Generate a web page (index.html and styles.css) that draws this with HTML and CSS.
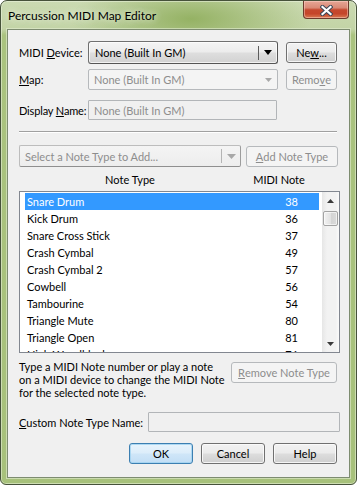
FILE: index.html
```html
<!DOCTYPE html>
<html>
<head>
<meta charset="utf-8">
<link rel="stylesheet" href="styles.css">
</head>
<body>
<div class="window">
  <div class="titlebar">
    <span class="title">Percussion MIDI Map Editor</span>
    <div class="close">
      <svg width="13" height="11" viewBox="0 0 13 11"><path d="M2.5 2 L10.5 9 M10.5 2 L2.5 9" stroke="#3a4656" stroke-width="4.2" stroke-linecap="square"/><path d="M2.5 2 L10.5 9 M10.5 2 L2.5 9" stroke="#ffffff" stroke-width="2.2" stroke-linecap="square"/></svg>
    </div>
  </div>
  <div class="client">
    <div class="row r1">
      <span class="lbl">MIDI <u>D</u>evice:</span>
      <div class="combo active">
        <span class="ctext">None (Built In GM)</span>
        <span class="dsep"></span>
        <span class="arrow"><svg width="8" height="5" viewBox="0 0 8 5"><path d="M0 0H8L4 5Z" fill="#000"/></svg></span>
      </div>
      <div class="btn w50">Ne<u>w</u>...</div>
    </div>
    <div class="row r2">
      <span class="lbl"><u>M</u>ap:</span>
      <div class="combo disabled">
        <span class="ctext">None (Built In GM)</span>
        <span class="arrow"><svg width="7" height="4" viewBox="0 0 7 4"><path d="M0 0H7L3.5 4Z" fill="#a8a8a8"/></svg></span>
      </div>
      <div class="btn w50 dis">Remo<u>v</u>e</div>
    </div>
    <div class="row r3">
      <span class="lbl tight">Display <u>N</u>ame:</span>
      <div class="tbox dn">None (Built In GM)</div>
    </div>
    <div class="sep"></div>
    <div class="row r4">
      <div class="combo disabled raised wsel">
        <span class="ctext">Select a Note Type to Add...</span>
        <span class="dsep light"></span>
        <span class="arrow"><svg width="9" height="5" viewBox="0 0 9 5"><path d="M0 0H9L4.5 5Z" fill="#a8a8a8"/></svg></span>
      </div>
      <div class="btn dis wadd"><u>A</u>dd Note Type</div>
    </div>
    <div class="lhead">
      <span class="hc1">Note Type</span>
      <span class="hc2">MIDI Note</span>
    </div>
    <div class="list">
      <div class="items">
        <div class="item sel"><span class="nm">Snare Drum</span><span class="nt">38</span></div>
        <div class="item"><span class="nm">Kick Drum</span><span class="nt">36</span></div>
        <div class="item"><span class="nm">Snare Cross Stick</span><span class="nt">37</span></div>
        <div class="item"><span class="nm">Crash Cymbal</span><span class="nt">49</span></div>
        <div class="item"><span class="nm">Crash Cymbal 2</span><span class="nt">57</span></div>
        <div class="item"><span class="nm">Cowbell</span><span class="nt">56</span></div>
        <div class="item"><span class="nm">Tambourine</span><span class="nt">54</span></div>
        <div class="item"><span class="nm">Triangle Mute</span><span class="nt">80</span></div>
        <div class="item"><span class="nm">Triangle Open</span><span class="nt">81</span></div>
        <div class="item"><span class="nm">High Woodblock</span><span class="nt">76</span></div>
      </div>
      <div class="vscroll">
        <div class="sarrow"><svg width="7" height="4" viewBox="0 0 7 4"><path d="M3.5 0L7 4H0Z" fill="#3a3a3a"/></svg></div>
        <div class="thumb"></div>
        <div class="strack"></div>
        <div class="sarrow"><svg width="7" height="4" viewBox="0 0 7 4"><path d="M0 0H7L3.5 4Z" fill="#3a3a3a"/></svg></div>
      </div>
    </div>
    <div class="row r5">
      <div class="desc">Type a MIDI Note number or play a note<br>on a MIDI device to change the MIDI Note<br>for the selected note type.</div>
      <div class="btn dis wrem"><u>R</u>emove Note Type</div>
    </div>
    <div class="row r6">
      <span class="lbl wide"><u>C</u>ustom Note Type Name:</span>
      <div class="tbox cn"></div>
    </div>
    <div class="row r7">
      <div class="btn wb def">OK</div>
      <div class="btn wb">Cancel</div>
      <div class="btn wb">Help</div>
    </div>
  </div>
</div>
</body>
</html>
```

FILE: styles.css
```css
* { box-sizing: border-box; }
html, body { margin: 0; padding: 0; }
body {
  width: 357px;
  height: 485px;
  overflow: hidden;
  background: #ffffff;
  font-family: "Lato", "Liberation Sans", sans-serif;
  font-size: 11px;
  color: #000;
}
u { text-decoration: underline; text-underline-offset: 1px; }

.window {
  width: 357px;
  height: 485px;
  border: 1px solid #46523a;
  border-radius: 7px 7px 6px 6px;
  padding: 0 6px 6px 6px;
  display: flex;
  flex-direction: column;
  background:
    radial-gradient(ellipse 120px 40px at 190px 18px, rgba(146,176,96,0.95), rgba(146,176,96,0) 100%),
    linear-gradient(to bottom, #cbdab2 0px, #c3d4a6 28px, #aac37f 34px, #a7c17b 100%);
  box-shadow: inset 0 0 0 1px rgba(236,244,224,0.55);
}

.titlebar {
  height: 28px;
  display: flex;
  justify-content: space-between;
  align-items: flex-start;
}
.title {
  padding: 7px 0 0 1px;
  font-size: 12px;
  line-height: 15px;
  color: #000;
  text-shadow: 0 0 6px rgba(236,244,226,0.95), 0 0 10px rgba(236,244,226,0.8);
}
.close {
  width: 46px;
  height: 18px;
  margin-right: 1px;
  border: 1px solid #6b3a2c;
  border-top: none;
  border-radius: 0 0 4px 4px;
  background: linear-gradient(to bottom, #e6a696 0%, #d98a76 40%, #c5482e 52%, #c5452a 75%, #d97a52 100%);
  box-shadow: inset 0 0 0 1px rgba(255,220,210,0.45);
  display: flex;
  align-items: center;
  justify-content: center;
  padding-top: 1px;
}

.client {
  flex: 1;
  border: 1px solid #7d8c70;
  background: #f0f0f0;
  padding: 11px 9px 0 11px;
  display: flex;
  flex-direction: column;
  box-shadow: 0 0 0 1px rgba(226,236,210,0.6);
}

.row { display: flex; align-items: center; }
.lbl { width: 69px; flex: none; line-height: 13px; white-space: nowrap; }
.lbl.tight { letter-spacing: -0.15px; }
.lbl.wide { width: 129px; }

.r1 { height: 23px; }
.r2 { height: 21px; margin-top: 5px; }
.r3 { height: 20px; margin-top: 10px; }
.r4 { height: 22px; margin-top: 12px; }

.combo {
  width: 190px;
  flex: none;
  display: flex;
  align-items: center;
  border-radius: 3px;
}
.combo.active {
  height: 23px;
  border: 1px solid #707070;
  border-right-color: #555;
  border-bottom-color: #555;
  background: linear-gradient(to bottom, #f4f4f4 0%, #ececec 48%, #dedede 52%, #d2d2d2 100%);
  box-shadow: inset 0 0 0 1px rgba(255,255,255,0.7);
}
.combo.disabled {
  height: 21px;
  border: 1px solid #b6b9bc;
  background: #f4f4f4;
  color: #8d8d8d;
  border-radius: 2px;
}
.combo.raised {
  height: 22px;
  border-color: #bdbdbd #9c9c9c #8f8f8f #bdbdbd;
  background: linear-gradient(to bottom, #f4f4f4 0%, #ededed 100%);
}
.combo.wsel { width: 222px; }
.ctext { flex: 1; padding-left: 6px; line-height: 13px; white-space: nowrap; }
.combo.disabled .ctext { padding-left: 5px; }
.dsep { width: 1px; height: 14px; background: #5c5c5c; flex: none; }
.dsep.light { background: #b4b4b4; }
.arrow { width: 18px; flex: none; display: flex; justify-content: center; align-items: center; }

.btn {
  flex: none;
  height: 21px;
  border: 1px solid #707070;
  border-radius: 3px;
  background: linear-gradient(to bottom, #f2f2f2 0%, #ebebeb 48%, #dddddd 52%, #cfcfcf 100%);
  box-shadow: inset 0 0 0 1px rgba(252,252,252,0.85);
  display: flex;
  align-items: center;
  justify-content: center;
  line-height: 13px;
  white-space: nowrap;
}
.btn.dis {
  border-color: #b6b9bc;
  background: #f4f4f4;
  box-shadow: none;
  color: #8d8d8d;
}
.btn.def {
  border-color: #3c7fb1;
  background: linear-gradient(to bottom, #e8f4fc 0%, #dcedfa 48%, #cfe6f8 52%, #c2def5 100%);
  box-shadow: inset 0 0 0 1px rgba(160,210,240,0.8);
}
.w50 { width: 51px; margin-left: 8px; }
.wadd { width: 92px; margin-left: 5px; }
.wrem { width: 106px; margin-right: 3px; }
.wb { width: 64px; margin-left: 8px; }

.tbox {
  height: 20px;
  border: 1px solid #b2b5b8;
  background: #f0f0f0;
  color: #8d8d8d;
  padding-left: 5px;
  display: flex;
  align-items: center;
  line-height: 13px;
  border-radius: 1px;
}
.tbox.dn { width: 189px; }
.tbox.cn { width: 192px; }

.sep {
  margin-top: 11px;
  width: 318px;
  height: 2px;
  border-top: 1px solid #a0a0a0;
  border-bottom: 1px solid #ffffff;
}

.lhead {
  height: 24px;
  display: flex;
  padding-top: 6px;
  line-height: 13px;
}
.hc1 { width: 222px; text-align: center; }
.hc2 { width: 76px; text-align: center; }

.list {
  height: 162px;
  width: 321px;
  border: 1px solid #828790;
  background: #fff;
  display: flex;
  overflow: hidden;
}
.items {
  flex: 1;
  padding: 1px 3px 0 5px;
  overflow: hidden;
}
.item {
  height: 17px;
  display: flex;
  align-items: center;
  line-height: 13px;
}
.item.sel { background: #3399ff; color: #fff; }
.nm { flex: 1; padding-left: 2px; }
.nt { padding-right: 21px; }

.vscroll {
  width: 17px;
  flex: none;
  display: flex;
  flex-direction: column;
  background: linear-gradient(to right, #e6e6e6 0%, #f2f2f2 30%, #f2f2f2 80%, #fafafa 100%);
}
.sarrow {
  height: 17px;
  flex: none;
  display: flex;
  align-items: center;
  justify-content: center;
}
.thumb {
  height: 15px;
  margin: 2px 1px 0 1px;
  border: 1px solid #a3a3a3;
  border-radius: 2px;
  background: linear-gradient(to right, #f2f2f2 0%, #e2e2e2 50%, #d4d4d4 55%, #dadada 100%);
  box-shadow: inset 0 0 0 1px rgba(255,255,255,0.6);
}
.strack { flex: 1; }

.r5 {
  margin-top: 7px;
  align-items: flex-start;
  justify-content: space-between;
}
.desc { line-height: 13px; white-space: nowrap; }
.r5 .btn { margin-top: 2px; }

.r6 { height: 20px; margin-top: 13px; }
.r7 { height: 21px; margin-top: 11px; justify-content: flex-end; padding-right: 3px; }
```
